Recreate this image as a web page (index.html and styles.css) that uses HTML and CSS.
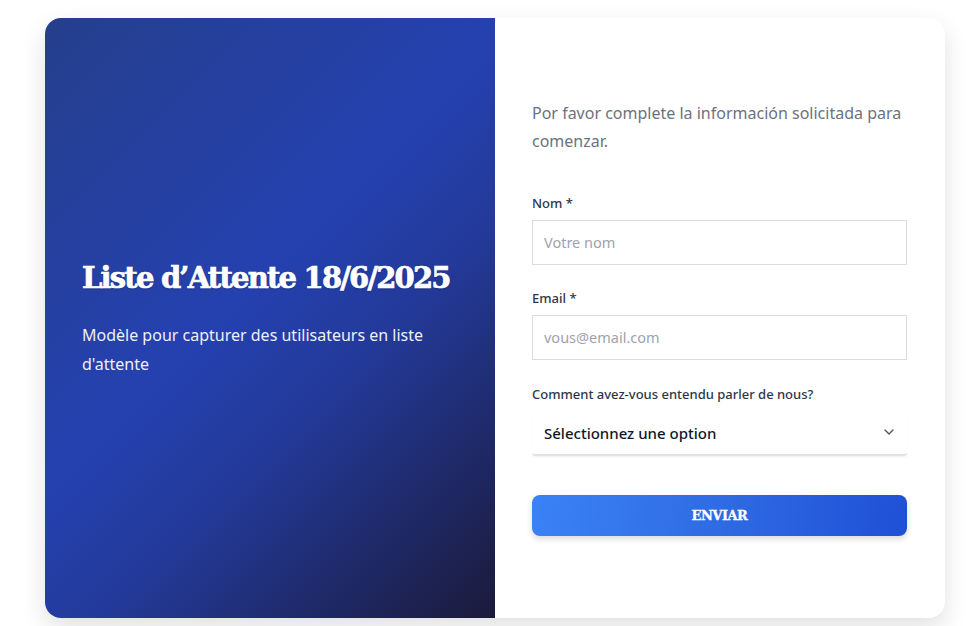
FILE: index.html
```html
<!DOCTYPE html>
<html lang="fr">
<head>
<meta charset="utf-8">
<title>Liste d'Attente</title>
<link rel="stylesheet" href="styles.css">
</head>
<body>
<div class="page">
  <div class="card">
    <section class="hero">
      <h1 class="hero-title">Liste d’Attente 18/6/2025</h1>
      <p class="hero-text">Modèle pour capturer des utilisateurs en liste d'attente</p>
    </section>
    <section class="form-side">
      <p class="intro">Por favor complete la información solicitada para comenzar.</p>
      <form class="form">
        <div class="field">
          <label class="label">Nom *</label>
          <div class="input">Votre nom</div>
        </div>
        <div class="field field-wide">
          <label class="label">Email *</label>
          <div class="input">vous@email.com</div>
        </div>
        <div class="field field-select">
          <label class="label">Comment avez-vous entendu parler de nous?</label>
          <div class="select">
            <span>Sélectionnez une option</span>
            <svg class="chev" width="16" height="16" viewBox="0 0 24 24" fill="none" stroke="#4b5563" stroke-width="2" stroke-linecap="round" stroke-linejoin="round"><path d="M6 9l6 6 6-6"/></svg>
          </div>
        </div>
        <div class="button">ENVIAR</div>
      </form>
    </section>
  </div>
</div>
</body>
</html>
```
FILE: styles.css
```css
* { box-sizing: border-box; }
html, body { margin: 0; padding: 0; background: #ffffff; }
body { font-family: "Noto Sans", "Open Sans", sans-serif; }
.page { padding: 18px 25px 8px 45px; }
.card {
  width: 900px;
  height: 600px;
  display: flex;
  border-radius: 16px;
  overflow: hidden;
  background: #ffffff;
  box-shadow: 0 10px 24px rgba(0,0,0,0.12);
}
.hero {
  width: 450px;
  padding: 0 30px 0 37px;
  display: flex;
  flex-direction: column;
  justify-content: center;
  color: #ffffff;
  background: linear-gradient(135deg, #253f8c 0%, #2541b0 45%, #233a9a 62%, #1b1a3a 100%);
}
.hero-title {
  margin: 2px 0 24px;
  font-family: "DejaVu Serif", serif;
  font-weight: bold;
  font-size: 29px;
  letter-spacing: -1.8px;
  line-height: 38px;
  white-space: nowrap;
  -webkit-text-stroke: 0.7px #ffffff;
  text-shadow: 0 1px 2px rgba(0,0,0,0.25);
}
.hero-text {
  margin: 0;
  font-size: 16px;
  line-height: 29px;
  color: #eef0fa;
}
.form-side {
  width: 450px;
  padding: 0 38px 2px 37px;
  display: flex;
  flex-direction: column;
  justify-content: center;
}
.intro {
  margin: 0 0 39px;
  font-size: 16px;
  line-height: 28px;
  color: #6b7280;
}
.form { display: flex; flex-direction: column; }
.field { display: flex; flex-direction: column; margin-bottom: 24px; }
.field-wide { margin-bottom: 25px; }
.label {
  font-size: 13px;
  font-weight: 500;
  color: #2d3748;
  line-height: 18px;
  margin-bottom: 8px;
}
.field-select .label { margin-bottom: 9px; }
.input {
  height: 45px;
  border: 1px solid #dcdcdc;
  padding: 0 11px;
  display: flex;
  align-items: center;
  font-size: 14.5px;
  color: #9ca3af;
}
.select {
  height: 44px;
  display: flex;
  align-items: center;
  justify-content: space-between;
  padding: 0 10px 0 12px;
  font-size: 15px;
  font-weight: 500;
  color: #111827;
  border-bottom: 2px solid #e2e2e2;
  border-radius: 0 0 3px 3px;
  box-shadow: 0 1px 2px rgba(0,0,0,0.06);
}
.chev { margin-top: -2px; }
.button {
  margin-top: 15px;
  height: 41px;
  border-radius: 8px;
  background: linear-gradient(100deg, #3b82f6 0%, #2f6be3 50%, #1f4fd6 100%);
  display: flex;
  align-items: center;
  justify-content: center;
  color: #ffffff;
  font-family: "DejaVu Serif", serif;
  font-weight: bold;
  font-size: 13px;
  letter-spacing: -0.5px;
  -webkit-text-stroke: 0.3px #ffffff;
  box-shadow: 0 3px 6px rgba(0,0,0,0.15);
}
```
